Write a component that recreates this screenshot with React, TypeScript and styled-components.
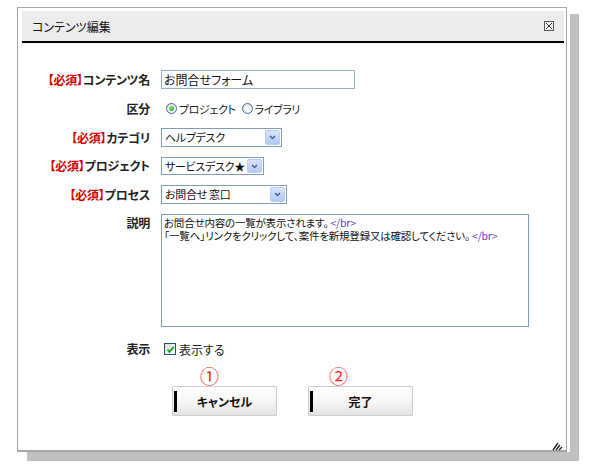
import React from 'react';
import styled, { createGlobalStyle } from 'styled-components';

const GlobalStyle = createGlobalStyle`
  html, body {
    margin: 0;
    padding: 0;
    background: #ffffff;
  }
  body {
    font-family: "Noto Sans CJK JP", "Noto Sans", sans-serif;
    font-size: 12px;
    color: #000000;
    font-feature-settings: "palt";
  }
`;

const App = () => {
    return (
        <Page>
            <GlobalStyle />
            <Dialog>
                <TitleBar>
                    <Title>コンテンツ編集</Title>
                    <CloseBox>
                        <svg width="8" height="8" viewBox="0 0 8 8">
                            <path d="M1 1 L7 7 M7 1 L1 7" stroke="#333" strokeWidth="1" />
                        </svg>
                    </CloseBox>
                </TitleBar>
                <Body>
                    <FormGrid>
                        <Label>
                            <Required>【必須】</Required>コンテンツ名
                        </Label>
                        <TextInput>お問合せフォーム</TextInput>

                        <Label>区分</Label>
                        <RadioGroup>
                            <RadioItem>
                                <Radio $checked />
                                プロジェクト
                            </RadioItem>
                            <RadioItem>
                                <Radio />
                                ライブラリ
                            </RadioItem>
                        </RadioGroup>

                        <Label>
                            <Required>【必須】</Required>カテゴリ
                        </Label>
                        <Select $width={121}>
                            <SelectText>ヘルプデスク</SelectText>
                            <DropButton>
                                <Chevron />
                            </DropButton>
                        </Select>

                        <Label>
                            <Required>【必須】</Required>プロジェクト
                        </Label>
                        <Select $width={103} $height={18}>
                            <SelectText>サービスデスク★</SelectText>
                            <DropButton>
                                <Chevron />
                            </DropButton>
                        </Select>

                        <Label>
                            <Required>【必須】</Required>プロセス
                        </Label>
                        <Select $width={126}>
                            <SelectText>お問合せ 窓口</SelectText>
                            <DropButton>
                                <Chevron />
                            </DropButton>
                        </Select>

                        <Label $top>説明</Label>
                        <TextArea>
                            <TextLine>
                                お問合せ内容の一覧が表示されます。<Tag>&lt;/br&gt;</Tag>
                            </TextLine>
                            <TextLine>
                                「一覧へ」リンクをクリックして、案件を新規登録又は確認してください。<Tag>&lt;/br&gt;</Tag>
                            </TextLine>
                        </TextArea>

                        <Label>表示</Label>
                        <CheckRow>
                            <CheckBox>
                                <svg width="9" height="9" viewBox="0 0 9 9">
                                    <path d="M1.5 4.5 L3.5 6.8 L7.8 1.8" stroke="#21a121" strokeWidth="1.8" fill="none" />
                                </svg>
                            </CheckBox>
                            表示する
                        </CheckRow>
                    </FormGrid>

                    <ButtonArea>
                        <ButtonGroup>
                            <Marker $offset={28}>①</Marker>
                            <ActionButton>キャンセル</ActionButton>
                        </ButtonGroup>
                        <ButtonGroup>
                            <Marker $offset={21}>②</Marker>
                            <ActionButton>完了</ActionButton>
                        </ButtonGroup>
                    </ButtonArea>
                </Body>
                <Grip>
                    <svg width="11" height="10" viewBox="0 0 11 10">
                        <path d="M1 9 L6 2 M4 9 L8 4 M7 9 L10 6" stroke="#222" strokeWidth="1.4" />
                    </svg>
                </Grip>
            </Dialog>
        </Page>
    );
};

const Chevron = () => (
    <svg width="7" height="5" viewBox="0 0 7 5">
        <path d="M1 1 L3.5 3.5 L6 1" stroke="#4d6185" strokeWidth="1.5" fill="none" />
    </svg>
);

const Page = styled.div`
    width: 590px;
    height: 465px;
    overflow: hidden;
    box-sizing: border-box;
    padding: 7px 0 0 17px;
`;

const Dialog = styled.div`
    position: relative;
    width: 550px;
    height: 445px;
    box-sizing: border-box;
    border: 1px solid #a6a6a6;
    border-bottom-width: 2px;
    background: #ffffff;
    padding: 3px 2px 0 4px;
    display: flex;
    flex-direction: column;
    box-shadow: 3px 0 0 #ffffff, 11px 8px 0 1px #c0c0c0;
`;

const TitleBar = styled.div`
    height: 30px;
    flex-shrink: 0;
    background: #ececec;
    border-bottom: 2px solid #000000;
    display: flex;
    align-items: center;
    justify-content: space-between;
    padding: 0 10px;
`;

const Title = styled.div`
    font-size: 12px;
    color: #111111;
`;

const CloseBox = styled.div`
    width: 10px;
    height: 10px;
    box-sizing: border-box;
    border: 1px solid #555555;
    background: #f4f4f4;
    display: flex;
    align-items: center;
    justify-content: center;
    margin-top: -1px;
`;

const Body = styled.div`
    padding-top: 27px;
    display: flex;
    flex-direction: column;
`;

const FormGrid = styled.div`
    display: grid;
    grid-template-columns: 128px 1fr;
    column-gap: 11px;
    row-gap: 10px;
    align-items: center;
`;

const Label = styled.div<{ $top?: boolean }>`
    text-align: right;
    font-weight: 700;
    font-size: 12px;
    letter-spacing: -0.2px;
    color: #222222;
    white-space: nowrap;
    align-self: ${(p) => (p.$top ? 'start' : 'center')};
    padding-top: ${(p) => (p.$top ? '1px' : '0')};
    line-height: 16px;
`;

const Required = styled.span`
    color: #d40000;
    font-weight: 700;
`;

const TextInput = styled.div`
    width: 194px;
    height: 19px;
    box-sizing: border-box;
    border: 1px solid #9aaec4;
    padding: 0 2px;
    font-size: 12px;
    line-height: 17px;
    color: #111111;
`;

const RadioGroup = styled.div`
    height: 19px;
    display: flex;
    align-items: center;
    gap: 6px;
    padding-left: 5px;
`;

const RadioItem = styled.label`
    display: flex;
    align-items: center;
    gap: 2px;
    font-size: 11px;
    letter-spacing: -0.4px;
    color: #222222;
`;

const Radio = styled.span<{ $checked?: boolean }>`
    width: 11px;
    height: 11px;
    box-sizing: border-box;
    border-radius: 50%;
    border: 1px solid #3d6aa2;
    background: radial-gradient(circle at 60% 65%, #ffffff 0%, #e8e8e3 70%, #d4d4cc 100%);
    display: flex;
    align-items: center;
    justify-content: center;
    &::after {
        content: '';
        display: ${(p) => (p.$checked ? 'block' : 'none')};
        width: 5px;
        height: 5px;
        border-radius: 50%;
        background: radial-gradient(circle at 35% 35%, #7be07b, #21a121);
    }
`;

const Select = styled.div<{ $width: number; $height?: number }>`
    width: ${(p) => p.$width}px;
    height: ${(p) => p.$height || 19}px;
    box-sizing: border-box;
    border: 1px solid #7f9db9;
    padding: 1px;
    display: flex;
    align-items: stretch;
    justify-content: space-between;
    gap: 2px;
    background: #ffffff;
`;

const SelectText = styled.div`
    padding-left: 2px;
    font-size: 11px;
    letter-spacing: -0.3px;
    line-height: 15px;
    color: #111111;
    white-space: nowrap;
`;

const DropButton = styled.div`
    width: 15px;
    flex-shrink: 0;
    box-sizing: border-box;
    border: 1px solid #b9ccf4;
    border-radius: 2px;
    background: linear-gradient(#d8e4fd, #b3c9f5);
    display: flex;
    align-items: center;
    justify-content: center;
`;

const TextArea = styled.div`
    width: 368px;
    height: 113px;
    box-sizing: border-box;
    border: 1px solid #7f9db9;
    padding: 1px 2px;
    font-size: 10.5px;
    letter-spacing: -0.2px;
    color: #111111;
    white-space: nowrap;
`;

const TextLine = styled.div`
    height: 13px;
    line-height: 13px;
`;

const Tag = styled.span`
    color: #5b3fc4;
    margin-left: 2px;
`;

const CheckRow = styled.label`
    height: 24px;
    display: flex;
    align-items: center;
    gap: 3px;
    padding-left: 3px;
    font-size: 12px;
    color: #222222;
`;

const CheckBox = styled.span`
    width: 12px;
    height: 12px;
    box-sizing: border-box;
    border: 1px solid #1c5180;
    background: linear-gradient(135deg, #dcdcd7, #ffffff);
    display: flex;
    align-items: center;
    justify-content: center;
`;

const ButtonArea = styled.div`
    display: flex;
    gap: 31px;
    padding-left: 150px;
    margin-top: 5px;
`;

const ButtonGroup = styled.div`
    display: flex;
    flex-direction: column;
`;

const Marker = styled.div<{ $offset: number }>`
    height: 20px;
    padding-left: ${(p) => p.$offset}px;
    font-size: 19px;
    line-height: 20px;
    color: #ff1a1a;
    font-family: "Noto Sans CJK JP", sans-serif;
`;

const ActionButton = styled.button`
    position: relative;
    width: 105px;
    height: 30px;
    box-sizing: border-box;
    border: 1px solid #cdcdcd;
    border-radius: 1px;
    background: linear-gradient(#ffffff 0%, #f6f6f6 50%, #e4e4e4 100%);
    font-family: "Noto Sans CJK JP", sans-serif;
    font-feature-settings: "palt";
    font-size: 12px;
    font-weight: 700;
    color: #111111;
    padding: 0;
    &::before {
        content: '';
        position: absolute;
        left: 1px;
        top: 4px;
        width: 3px;
        height: 21px;
        background: #000000;
    }
`;

const Grip = styled.div`
    position: absolute;
    right: 3px;
    bottom: 3px;
    width: 11px;
    height: 10px;
`;

export default App;
